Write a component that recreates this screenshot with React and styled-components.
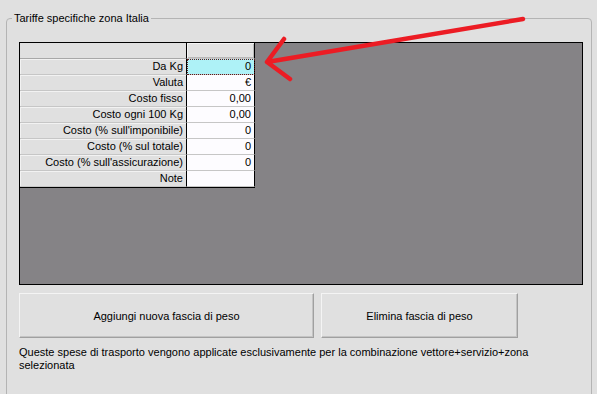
import React from 'react';
import styled, { createGlobalStyle } from 'styled-components';

const GlobalStyle = createGlobalStyle`
    body {
        margin: 0;
        background: #e0e0e0;
        font-family: "Liberation Sans", Arial, sans-serif;
        font-size: 11px;
        color: #000;
    }
`;

const rows = [
    { label: 'Da Kg', value: '0', selected: true },
    { label: 'Valuta', value: '€' },
    { label: 'Costo fisso', value: '0,00' },
    { label: 'Costo ogni 100 Kg', value: '0,00' },
    { label: "Costo (% sull'imponibile)", value: '0' },
    { label: 'Costo (% sul totale)', value: '0' },
    { label: "Costo (% sull'assicurazione)", value: '0' },
    { label: 'Note', value: '' },
];

const App = () => {
    return (
        <Page>
            <GlobalStyle />
            <GroupBox>
                <Legend>Tariffe specifiche zona Italia</Legend>
                <GridArea>
                    <Sheet>
                        <CornerCell />
                        <ColumnHeader />
                        {rows.map((row, index) => (
                            <React.Fragment key={index}>
                                <RowLabel>{row.label}</RowLabel>
                                <ValueCell $selected={row.selected}>{row.value}</ValueCell>
                            </React.Fragment>
                        ))}
                    </Sheet>
                </GridArea>
                <Buttons>
                    <Button $width={295}>Aggiungi nuova fascia di peso</Button>
                    <Button $width={197}>Elimina fascia di peso</Button>
                </Buttons>
                <Note>Queste spese di trasporto vengono applicate esclusivamente per la combinazione vettore+servizio+zona selezionata</Note>
            </GroupBox>
            <Arrow width="597" height="394" viewBox="0 0 597 394">
                <path d="M523 19 L267 62 M284 39 L267 62 L290 79" fill="none" stroke="#ec1c24" strokeWidth="4.5" strokeLinecap="round" strokeLinejoin="round" />
            </Arrow>
        </Page>
    )
}

const Page = styled.div`
    position: relative;
    width: 597px;
    height: 394px;
    overflow: hidden;
    box-sizing: border-box;
    padding: 11px 5px 0 6px;
`;

const GroupBox = styled.fieldset`
    margin: 0;
    padding: 17px 8px 40px 12px;
    border: 1px solid #b4b4b4;
    border-radius: 4px;
    min-inline-size: 0;
`;

const Legend = styled.legend`
    margin-left: -7px;
    padding: 0 2px;
    line-height: 14px;
`;

const GridArea = styled.div`
    height: 243px;
    box-sizing: border-box;
    background: #858386;
    border: 1px solid #000;
`;

const Sheet = styled.div`
    display: inline-grid;
    grid-template-columns: 167px 68px;
    grid-auto-rows: 16px;
    border-bottom: 1px solid #000;
    vertical-align: top;
`;

const Cell = styled.div`
    box-sizing: border-box;
    border-right: 1px solid #000;
    border-bottom: 1px solid #c6c6c6;
    padding: 0 3px;
    line-height: 15px;
    text-align: right;
    white-space: nowrap;
    color: #000;
`;

const CornerCell = styled(Cell)`
    background: #e0e0e0;
    border-bottom-color: #a8a8a8;
`;

const ColumnHeader = styled(Cell)`
    background: #e2e2e2;
    box-shadow: inset 1px 1px 0 #f4f4f4, inset -1px -1px 0 #b8b8b8;
    border-bottom-color: #c6c6c6;
`;

const RowLabel = styled(Cell)`
    background: #e0e0e0;
    box-shadow: inset 1px 1px 0 #f2f2f2;
`;

const ValueCell = styled(Cell)`
    background: ${p => p.$selected ? '#aef2f7' : '#fdfcff'};
    outline: ${p => p.$selected ? '1px dotted #5a1a1a' : 'none'};
    outline-offset: -1px;
`;

const Buttons = styled.div`
    display: flex;
    gap: 7px;
    margin-top: 8px;
`;

const Button = styled.button`
    width: ${p => p.$width}px;
    height: 45px;
    font: inherit;
    color: #000;
    background: #e0e0e0;
    border: 1px solid;
    border-color: #f4f4f4 #a0a0a0 #a0a0a0 #f4f4f4;
    box-shadow: inset -1px -1px 0 #c4c4c4;
    padding: 0;
`;

const Note = styled.p`
    margin: 8px 0 0;
    width: 520px;
    line-height: 13px;
`;

const Arrow = styled.svg`
    position: absolute;
    top: 0;
    left: 0;
    pointer-events: none;
`;

export default App;
